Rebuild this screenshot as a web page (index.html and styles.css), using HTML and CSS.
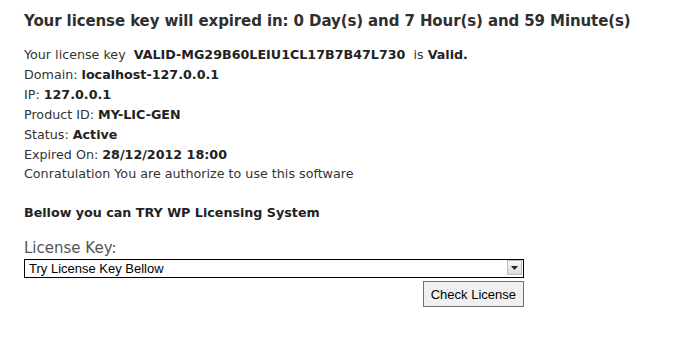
FILE: index.html
```html
<!DOCTYPE html>
<html>
<head>
<meta charset="utf-8">
<link rel="stylesheet" href="styles.css">
</head>
<body>
<div class="page">
  <h2 class="title">Your license key will expired in: 0 Day(s) and 7 Hour(s) and 59 Minute(s)</h2>
  <div class="info">
    <div class="line">Your license key&nbsp; <b>VALID-MG29B60LEIU1CL17B7B47L730</b>&nbsp; is <b>Valid.</b></div>
    <div class="line">Domain: <b>localhost-127.0.0.1</b></div>
    <div class="line">IP: <b>127.0.0.1</b></div>
    <div class="line">Product ID: <b>MY-LIC-GEN</b></div>
    <div class="line">Status: <b>Active</b></div>
    <div class="line">Expired On: <b>28/12/2012 18:00</b></div>
    <div class="line">Conratulation You are authorize to use this software</div>
  </div>
  <div class="try">Bellow you can TRY WP Licensing System</div>
  <form class="form">
    <label class="label">License Key:</label>
    <div class="select-wrap">
      <select class="select"><option>Try License Key Bellow</option></select>
      <span class="arrow"><svg width="7" height="4" viewBox="0 0 7 4"><path d="M0 0h7L3.5 4z" fill="#222"/></svg></span>
    </div>
    <div class="actions"><button type="button" class="btn">Check License</button></div>
  </form>
</div>
</body>
</html>
```
FILE: styles.css
```css
html, body { margin: 0; padding: 0; background: #fff; }
.page {
  padding: 11px 24px 0 24px;
  font-family: "DejaVu Sans", Verdana, sans-serif;
  color: #333;
}
.title {
  margin: 0 0 14px 0;
  font-size: 15px;
  font-weight: bold;
  line-height: 20px;
  color: #2f2f2f;
  letter-spacing: -0.1px;
}
.info { font-size: 12.7px; line-height: 19.9px; }
.info b { color: #222; }
.try { margin-top: 19px; font-size: 12.7px; font-weight: bold; line-height: 20px; color: #222; }
.form { margin-top: 15px; width: 500px; display: flex; flex-direction: column; }
.label { font-size: 15px; line-height: 20px; color: #555; }
.select-wrap { position: relative; height: 19px; }
.select {
  -webkit-appearance: none; appearance: none;
  box-sizing: border-box; width: 100%; height: 19px;
  border: 1px solid #000; border-radius: 0; background: #fff;
  font-family: "Liberation Sans", Arial, sans-serif; font-size: 13px; color: #000;
  padding: 0 0 0 4px; margin: 0;
}
.arrow {
  position: absolute; right: 2px; top: 2px; width: 15px; height: 15px;
  box-sizing: border-box; border: 1px solid #bbb; background: linear-gradient(#f6f6f6, #dcdcdc);
  display: flex; align-items: center; justify-content: center;
}
.actions { display: flex; justify-content: flex-end; margin-top: 4px; }
.btn {
  font-family: "Liberation Sans", Arial, sans-serif; font-size: 13px; color: #000;
  height: 26px; padding: 0 7px; border: 1px solid #707070; border-radius: 0;
  background: #f0f0f0; margin: 0;
}
```
